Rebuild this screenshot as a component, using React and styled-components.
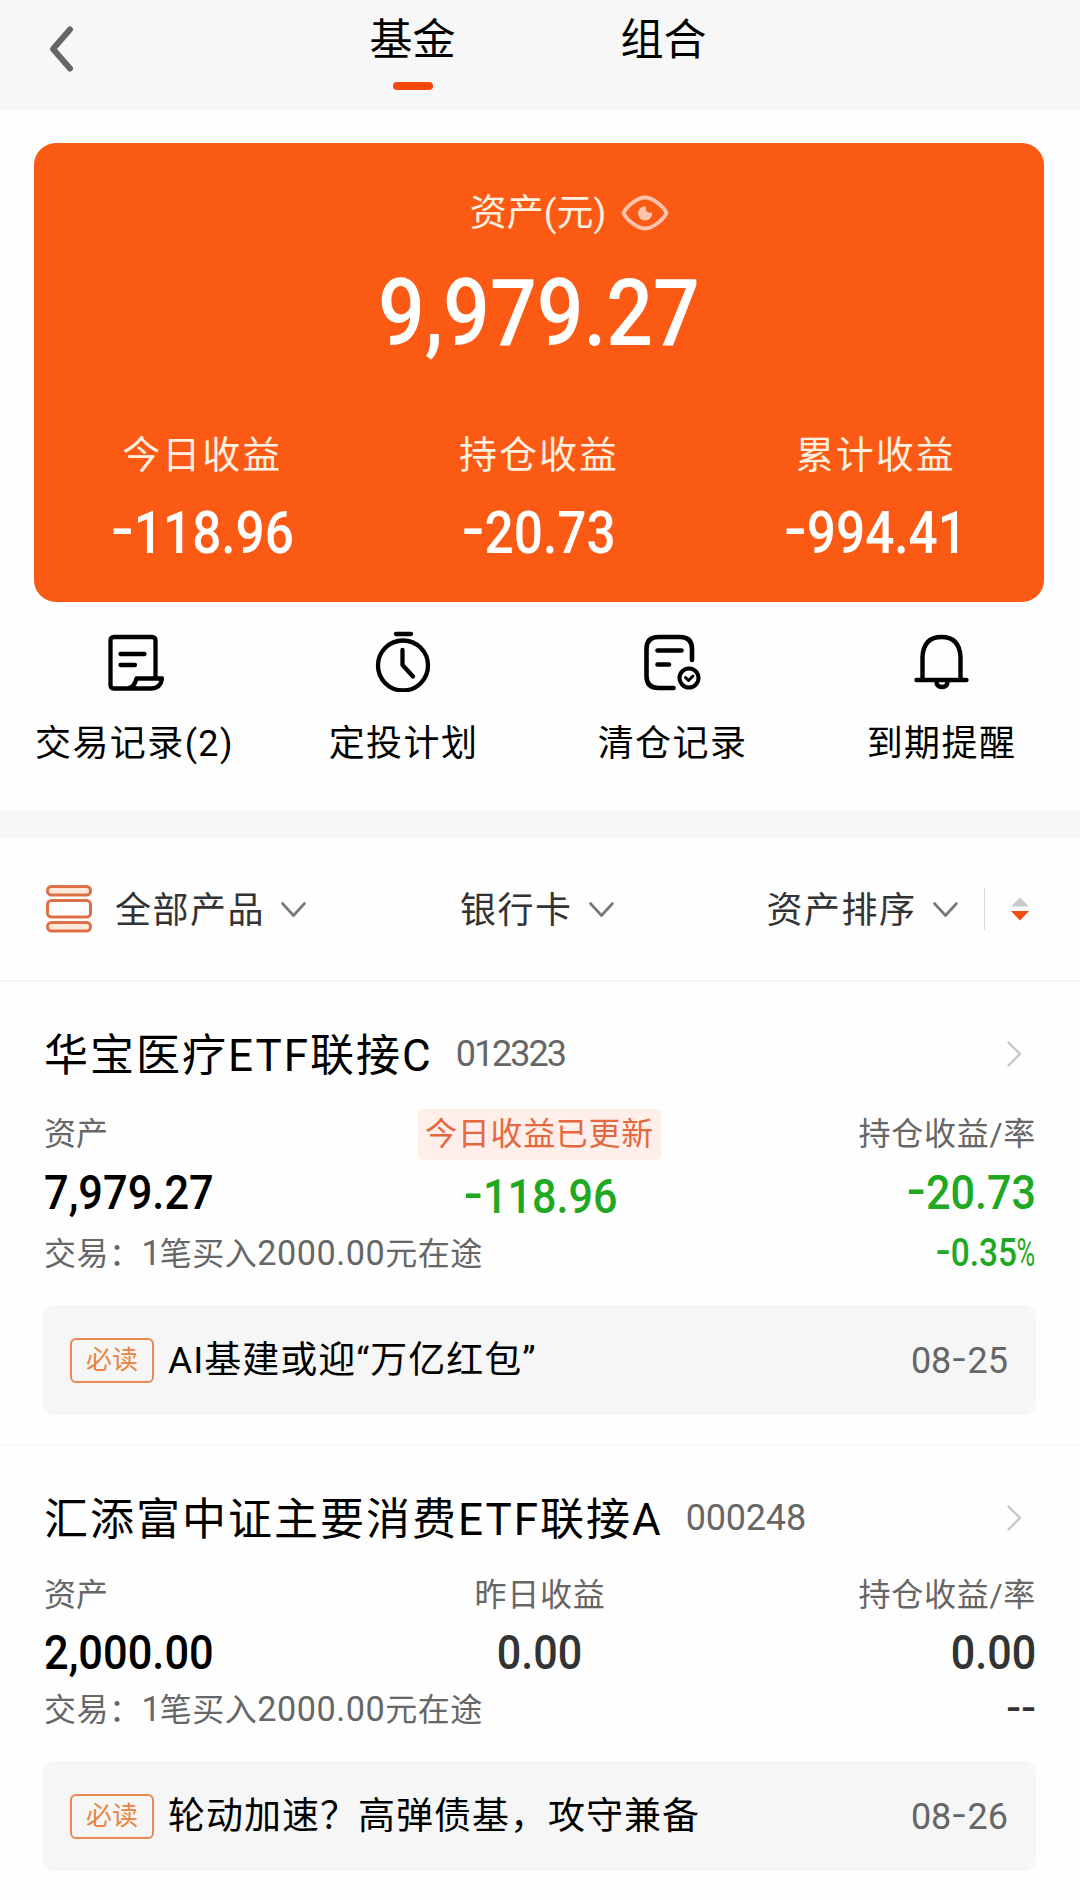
import React from 'react';
import styled, { createGlobalStyle } from 'styled-components';

const Global = createGlobalStyle`
  * { box-sizing: border-box; }
  body {
    margin: 0;
    background: #fff;
    color: #000;
    font-family: Roboto, "Noto Sans CJK SC", sans-serif;
  }
`;

const Page = styled.div`
  width: 1080px;
  height: 1900px;
  overflow: hidden;
  background: #fefefe;
`;

const Text = styled.span`
  font-size: ${p => p.$size}px;
  letter-spacing: ${p => p.$ls ?? 0}px;
  color: ${p => p.$color || 'inherit'};
  line-height: 1.2;
  white-space: nowrap;
`;

const Digits = styled.span`
  font-size: 1.07em;
  line-height: 1;
  letter-spacing: ${p => p.$ls ?? 0}px;
`;

const Figure = styled.span`
  display: inline-block;
  font-weight: 500;
  font-size: ${p => p.$size}px;
  color: ${p => p.$color || 'inherit'};
  line-height: 1.2;
  white-space: nowrap;
  transform: scaleX(${p => p.$sx ?? 0.88});
  transform-origin: ${p => p.$origin || 'center'};
`;

const Minus = styled.span`
  display: inline-block;
  width: ${p => p.$w ?? 0.45}em;
  text-align: center;
  transform: translateY(-0.065em) scaleX(${p => p.$sx ?? 1.3});
`;

const Percent = styled.span`
  display: inline-block;
  width: 0.56em;
  font-weight: 400;
  transform: scaleX(0.76);
  transform-origin: left;
`;

const Header = styled.header`
  height: 110px;
  background: #f7f7f7;
  display: grid;
  grid-template-columns: 309px 207px 44px 207px;
`;

const Back = styled.button`
  border: 0;
  padding: 25px 0 0 47px;
  background: none;
  display: flex;
  align-items: flex-start;
`;

const Tab = styled.div`
  grid-column: ${p => p.$col};
  display: flex;
  flex-direction: column;
  align-items: center;
  padding-top: 15px;
`;

const TabLine = styled.i`
  width: 40px;
  height: 8px;
  border-radius: 4px;
  background: #f9480b;
  margin-top: 15px;
`;

const Summary = styled.section`
  margin: 33px 36px 0 34px;
  height: 459px;
  border-radius: 22px;
  background: #fb5a14;
  color: #fff;
  display: flex;
  flex-direction: column;
  align-items: center;
`;

const SummaryHead = styled.div`
  height: 56px;
  margin-top: 42px;
  padding-left: 61px;
  display: flex;
  align-items: center;
  gap: 15px;

  ${Text} { padding-top: 3px; }
`;

const Total = styled.div`
  height: 116px;
  margin-top: 15px;
  display: flex;
  align-items: center;
`;

const Stats = styled.div`
  width: 100%;
  margin-top: 61px;
  display: grid;
  grid-template-columns: repeat(3, 1fr);
`;

const Stat = styled.div`
  display: flex;
  flex-direction: column;
  align-items: center;
  gap: 19px;
`;

const Actions = styled.nav`
  height: 209px;
  padding: 28px 4px 0 0;
  display: grid;
  grid-template-columns: repeat(4, 269px);
`;

const Action = styled.div`
  display: flex;
  flex-direction: column;
  align-items: center;
  gap: 31px;
`;

const Band = styled.div`
  height: 27px;
  background: #f7f7f7;
`;

const Filters = styled.div`
  height: 144px;
  border-bottom: 2px solid #f3f3f3;
  padding: 0 50px 0 45px;
  display: flex;
  align-items: center;
`;

const Filter = styled.div`
  display: flex;
  align-items: center;
  margin-left: ${p => p.$left}px;
  gap: 15px;

  ${Text} { padding-top: 6px; }
`;

const Divider = styled.i`
  width: 1px;
  height: 42px;
  background: #ddd;
  margin: 0 25px;
`;

const Fund = styled.article`
  padding: 40px 44px 29px;
  border-bottom: 2px solid #f8f8f8;
`;

const TitleRow = styled.div`
  height: 64px;
  padding-right: 1px;
  display: flex;
  align-items: center;

  & > ${Text} { padding-top: 5px; }
`;

const Code = styled.span`
  font-size: 36px;
  line-height: 1.2;
  letter-spacing: ${p => p.$ls}px;
  color: #666;
  margin-left: 23px;
  padding-top: 2px;
  flex: 1;
`;

const Row = styled.div`
  height: ${p => p.$h}px;
  margin-top: ${p => p.$top ?? 0}px;
  display: grid;
  grid-template-columns: repeat(3, 1fr);
  align-items: center;
`;

const Cell = styled.div`
  display: flex;
  justify-content: ${p => p.$align || 'flex-start'};
  padding-top: ${p => p.$drop ?? 0}px;
`;

const Updated = styled.div`
  height: 51px;
  padding: 0 7px;
  margin-right: 1px;
  border-radius: 5px;
  background: #ffeee9;
  display: flex;
  align-items: center;
`;

const Note = styled.div`
  height: 110px;
  margin: ${p => p.$top}px 0 0 -1px;
  padding: 0 28px 0 27px;
  border-radius: 12px;
  background: #f6f6f6;
  display: flex;
  align-items: center;

  & > ${Text} { padding-top: 3px; }
`;

const MustRead = styled.div`
  width: 84px;
  height: 45px;
  margin-right: 14px;
  border: 2px solid #e58a52;
  border-radius: 6px;
  display: flex;
  align-items: center;
  justify-content: center;

  ${Text} { padding-top: 2px; }
`;

const NoteTitle = styled.div`
  flex: 1;
  padding-top: 2px;
`;

const Icon = styled.svg.attrs({
  fill: 'none', strokeLinecap: 'round', strokeLinejoin: 'round',
})`
  flex: none;
`;

const Svg = ({ w, h, sw = 4, color = '#000', children }) => (
  <Icon width={w} height={h} viewBox={`0 0 ${w} ${h}`} stroke={color} strokeWidth={sw}>
    {children}
  </Icon>
);

const Eye = () => (
  <Svg w={48} h={36} sw={3.800} color="#ffc4ae">
    <path d="M2.500 18C5 12 16 2.500 24 2.500S43 12 45.500 18C43 24 32 33.500 24 33.500S5 24 2.500 18Z" />
    <path d="M24 12C23.500 16.500 26 18.500 30.500 18.500A6.400 6.400 0 1 1 24 12Z" fill="#ffc4ae" strokeWidth="1.500" />
  </Svg>
);

const Records = () => (
  <Svg w={58} h={62} sw={4.300}>
    <path d="M49.500 46V10.500Q49.500 7 46 7H8Q4.500 7 4.500 10.500V55Q4.500 58.500 8 58.500H45.500Q55 58 56 48.500H30.500Q28.500 57.500 21.500 58.500" />
    <path d="M14.500 24H38.500M14.500 35H29" />
  </Svg>
);

const Timer = () => (
  <Svg w={58} h={62} sw={4.300}>
    <circle cx="28" cy="35.500" r="25" />
    <path d="M21 4H36M27.500 20V35L38 46.500" />
  </Svg>
);

const Cleared = () => (
  <Svg w={58} h={62} sw={4.600}>
    <path d="M48 30V19Q48 7 36 7H14.500Q2.500 7 2.500 19V46Q2.500 58 14.500 58H29.500" />
    <path d="M13.500 20.500H37.500M13.500 34.500H25" />
    <circle cx="45" cy="48" r="9.500" strokeWidth="4" />
    <path d="M41.500 47.500L44.500 50.500L49 46" strokeWidth="3" />
  </Svg>
);

const Bell = () => (
  <Svg w={58} h={62} sw={4.400}>
    <path d="M9.500 49V27Q10.500 7 28.500 7T47.500 27V49M3.500 50H53.500" />
    <path d="M23.500 51.500Q23.500 57 29 57T34.500 51.500" />
  </Svg>
);

const Products = () => (
  <Svg w={48} h={50} sw={3} color="#dc7047">
    <rect x="2.500" y="2.500" width="43" height="8.500" rx="4" fill="#ffe9db" />
    <rect x="2.500" y="16.500" width="43" height="16.500" rx="4" />
    <rect x="2.500" y="38.500" width="43" height="8.500" rx="4" fill="#ffe9db" />
  </Svg>
);

const Down = () => (
  <Svg w={27} h={18} sw={2.600} color="#777"><path d="M2.500 3.500L13.500 15.500L24.500 3.500" /></Svg>
);

const Next = () => (
  <Svg w={28} h={28} sw={2.400} color="#c8c8c8"><path d="M1.500 2.500L13 14L1.500 25.500" /></Svg>
);

const Sort = () => (
  <Icon width="20" height="24" viewBox="0 0 20 24">
    <path d="M1 9.500L10 0.500L19 9.500Z" fill="#c9c9c9" />
    <path d="M1 14H19L10 23.500Z" fill="#f04d14" />
  </Icon>
);

const glyph = (c, i) => {
  if (c === '-') return <Minus key={i}>-</Minus>;
  if (c === '%') return <Percent key={i}>%</Percent>;
  return c;
};

const Amount = ({ children, ...props }) => (
  <Figure {...props}>{[...children].map(glyph)}</Figure>
);

const NoteDate = ({ children }) => (
  <Text $size={36} $color="#666">{[...children].map(glyph)}</Text>
);

const stats = [['今日收益', '-118.96'], ['持仓收益', '-20.73'], ['累计收益', '-994.41']];
const actions = [['交易记录(2)', Records], ['定投计划', Timer], ['清仓记录', Cleared], ['到期提醒', Bell]];

const funds = [
  {
    name: '华宝医疗ETF联接C', code: '012323', codeLs: -2, asset: '7,979.27', day: '-118.96', hold: '-20.73', rate: '-0.35%',
    updated: true, color: '#1fa822', note: 'AI基建或迎“万亿红包”', date: '08-25',
    label: [23, 51], value: 62, trade: 64, noteTop: 19,
  },
  {
    name: '汇添富中证主要消费ETF联接A', code: '000248', codeLs: -0.2, asset: '2,000.00', day: '0.00', hold: '0.00', rate: '--',
    color: '#333', note: '轮动加速？高弹债基，攻守兼备', date: '08-26',
    label: [19, 52], value: 65, trade: 49, noteTop: 26,
  },
];

function FundItem({ f }) {
  return (
    <Fund>
      <TitleRow>
        <Text $size={44} $ls={2}>{f.name}</Text>
        <Code $ls={f.codeLs}>{f.code}</Code>
        <Next />
      </TitleRow>
      <Row $top={f.label[0]} $h={f.label[1]}>
        <Cell><Text $size={32} $color="#666">资产</Text></Cell>
        <Cell $align="center">
          {f.updated
            ? <Updated><Text $size={32} $ls={0.7} $color="#e4693f">今日收益已更新</Text></Updated>
            : <Text $size={32} $ls={0.7} $color="#666">昨日收益</Text>}
        </Cell>
        <Cell $align="flex-end"><Text $size={32} $ls={0.7} $color="#666">持仓收益/率</Text></Cell>
      </Row>
      <Row $h={f.value}>
        <Cell><Amount $size={49} $sx={0.885} $origin="left">{f.asset}</Amount></Cell>
        <Cell $align="center" $drop={f.updated ? 8 : 0}><Amount $size={49} $color={f.color}>{f.day}</Amount></Cell>
        <Cell $align="flex-end"><Amount $size={49} $origin="right" $color={f.color}>{f.hold}</Amount></Cell>
      </Row>
      <Row $h={f.trade}>
        <Cell>
          <Text $size={32} $ls={0.5} $color="#666">
            交易：<Digits $ls={-1}>1</Digits>笔买入<Digits $ls={0.5}>2000.00</Digits>元在途
          </Text>
        </Cell>
        <Cell />
        <Cell $align="flex-end"><Amount $size={38} $origin="right" $color={f.color}>{f.rate}</Amount></Cell>
      </Row>
      <Note $top={f.noteTop}>
        <MustRead><Text $size={26} $color="#e8843f">必读</Text></MustRead>
        <NoteTitle><Text $size={37} $ls={1}>{f.note}</Text></NoteTitle>
        <NoteDate>{f.date}</NoteDate>
      </Note>
    </Fund>
  );
}

export default function App() {
  return (
    <Page>
      <Global />
      <Header>
        <Back aria-label="返回">
          <Svg w={28} h={48} sw={6} color="#666"><path d="M23 4.500L6 24L23 43.500" /></Svg>
        </Back>
        <Tab $col={2}><Text $size={43}>基金</Text><TabLine /></Tab>
        <Tab $col={4}><Text $size={43}>组合</Text></Tab>
      </Header>
      <Summary>
        <SummaryHead><Text $size={37} $color="#fff0e0">资产(元)</Text><Eye /></SummaryHead>
        <Total><Amount $size={93} $sx={0.885}>9,979.27</Amount></Total>
        <Stats>
          {stats.map(([k, v]) => (
            <Stat key={k}><Text $size={38} $ls={2} $color="#fff0e0">{k}</Text><Amount $size={59} $sx={0.87}>{v}</Amount></Stat>
          ))}
        </Stats>
      </Summary>
      <Actions>
        {actions.map(([k, Glyph]) => (
          <Action key={k}><Glyph /><Text $size={36} $ls={1.4}>{k}</Text></Action>
        ))}
      </Actions>
      <Band />
      <Filters>
        <Products />
        <Filter $left={22}><Text $size={36} $ls={1.5} $color="#333">全部产品</Text><Down /></Filter>
        <Filter $left={153}><Text $size={36} $ls={1.5} $color="#333">银行卡</Text><Down /></Filter>
        <Filter $left={152}><Text $size={36} $ls={1.5} $color="#333">资产排序</Text><Down /></Filter>
        <Divider />
        <Sort />
      </Filters>
      {funds.map(f => <FundItem key={f.code} f={f} />)}
    </Page>
  );
}
